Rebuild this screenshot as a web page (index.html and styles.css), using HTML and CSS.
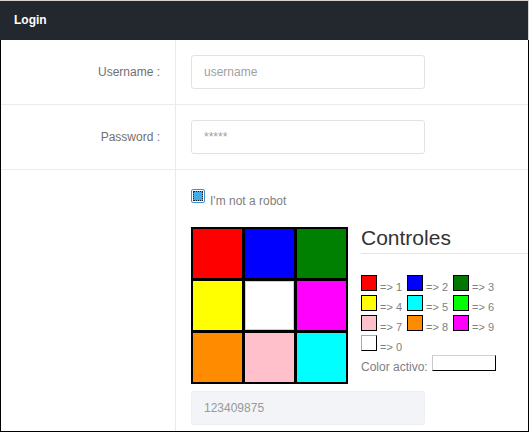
FILE: index.html
```html
<!DOCTYPE html>
<html lang="es">
<head>
<meta charset="utf-8">
<title>Login</title>
<link rel="stylesheet" href="styles.css">
</head>
<body>
<div class="page">
  <header class="topbar">Login</header>
  <main class="panel">
    <div class="row">
      <div class="label-cell">Username :</div>
      <div class="field-cell"><input class="field" type="text" placeholder="username"></div>
    </div>
    <div class="row">
      <div class="label-cell">Password :</div>
      <div class="field-cell"><input class="field" type="password" placeholder="*****"></div>
    </div>
    <div class="row row-last">
      <div class="label-cell"></div>
      <div class="field-cell field-cell-top">
        <div class="robot">
          <span class="check"><span class="check-inner"></span></span>
          <span class="robot-text">I'm not a robot</span>
        </div>
        <div class="captcha">
          <div class="board">
            <div class="cell c-red"></div>
            <div class="cell c-blue"></div>
            <div class="cell c-green"></div>
            <div class="cell c-yellow"></div>
            <div class="cell c-white"></div>
            <div class="cell c-magenta"></div>
            <div class="cell c-orange"></div>
            <div class="cell c-pink"></div>
            <div class="cell c-cyan"></div>
          </div>
          <div class="controls">
            <h3 class="controls-title">Controles</h3>
            <div class="palette">
              <div class="prow">
                <span class="item"><span class="sw s-red"></span><span class="key">=&gt; 1</span></span>
                <span class="item"><span class="sw s-blue"></span><span class="key">=&gt; 2</span></span>
                <span class="item"><span class="sw s-green"></span><span class="key">=&gt; 3</span></span>
              </div>
              <div class="prow">
                <span class="item"><span class="sw s-yellow"></span><span class="key">=&gt; 4</span></span>
                <span class="item"><span class="sw s-cyan"></span><span class="key">=&gt; 5</span></span>
                <span class="item"><span class="sw s-lime"></span><span class="key">=&gt; 6</span></span>
              </div>
              <div class="prow">
                <span class="item"><span class="sw s-pink"></span><span class="key">=&gt; 7</span></span>
                <span class="item"><span class="sw s-orange"></span><span class="key">=&gt; 8</span></span>
                <span class="item"><span class="sw s-magenta"></span><span class="key">=&gt; 9</span></span>
              </div>
              <div class="prow">
                <span class="item"><span class="sw s-white"></span><span class="key">=&gt; 0</span></span>
              </div>
              <div class="active-row">
                <span class="active-label">Color activo:</span>
                <span class="active-box"></span>
              </div>
            </div>
          </div>
        </div>
        <input class="field field-disabled" type="text" value="123409875" disabled>
      </div>
    </div>
  </main>
</div>
</body>
</html>
```

FILE: styles.css
```css
html, body {
  margin: 0;
  padding: 0;
}
body {
  font-family: "Liberation Sans", Arial, sans-serif;
  font-size: 12px;
  color: #666;
  background: #fff;
}
.page {
  width: 529px;
  height: 432px;
  box-sizing: border-box;
  padding-top: 1px;
  background: #d6d3ce;
  overflow: hidden;
}
.topbar {
  width: 528px;
  height: 39px;
  box-sizing: border-box;
  background: #23272e;
  color: #fff;
  font-weight: bold;
  font-size: 12px;
  line-height: 39px;
  padding-left: 14px;
}
.panel {
  display: block;
  width: 529px;
  height: 392px;
  box-sizing: border-box;
  background: #fff;
  border: 1px solid #000;
  border-top: none;
  overflow: hidden;
}
.row {
  display: flex;
  border-bottom: 1px solid #e9ebee;
}
.row-last {
  border-bottom: none;
}
.label-cell {
  width: 175px;
  flex: none;
  box-sizing: border-box;
  border-right: 1px solid #e9ebee;
  padding-right: 15px;
  display: flex;
  align-items: center;
  justify-content: flex-end;
  color: #707070;
}
.field-cell {
  flex: 1;
  padding: 15px;
}
.field-cell-top {
  padding-top: 19px;
  padding-right: 0;
}
.field {
  display: block;
  width: 234px;
  height: 34px;
  box-sizing: border-box;
  border: 1px solid #dfe3e8;
  border-radius: 3px;
  padding: 0 12px;
  font-family: "Liberation Sans", Arial, sans-serif;
  font-size: 12px;
  color: #888;
  background: #fff;
  outline: none;
}
.field::placeholder {
  color: #a0a0a0;
}
.field-disabled {
  background: #f3f4f7;
  border-color: #eceef1;
  color: #999;
  margin-top: 7px;
}
.robot {
  display: flex;
  align-items: flex-start;
  height: 14px;
  margin-bottom: 24px;
}
.check {
  width: 14px;
  height: 14px;
  box-sizing: border-box;
  border: 1px solid #3a8fd4;
  border-radius: 2px;
  padding: 1px;
  background: #fff;
  margin-right: 5px;
}
.check-inner {
  display: block;
  width: 10px;
  height: 10px;
  box-sizing: border-box;
  border: 1px dotted #222;
  background: #3daee9;
}
.robot-text {
  line-height: 14px;
  margin-top: 5px;
  color: #808080;
}
.captcha {
  display: flex;
  align-items: flex-start;
  gap: 13px;
}
.board {
  display: grid;
  grid-template-columns: repeat(3, 49px);
  grid-template-rows: repeat(3, 49px);
  gap: 3px;
  padding: 2px;
  background: #000;
  flex: none;
}
.cell {
  box-sizing: border-box;
}
.c-red { background: #ff0000; }
.c-blue { background: #0000ff; }
.c-green { background: #008000; }
.c-yellow { background: #ffff00; }
.c-white { background: #fff; border: 1px solid #cfcfcf; }
.c-magenta { background: #ff00ff; }
.c-orange { background: #ff8c00; }
.c-pink { background: #ffc0cb; }
.c-cyan { background: #00ffff; }
.controls {
  flex: 1;
}
.controls-title {
  margin: 0;
  font-weight: normal;
  font-size: 21px;
  line-height: 21px;
  color: #333;
  padding-bottom: 5px;
  border-bottom: 1px solid #e5e5e5;
}
.palette {
  padding-top: 21px;
}
.prow {
  display: flex;
  align-items: baseline;
  height: 16px;
  margin-bottom: 4px;
}
.item {
  display: flex;
  align-items: baseline;
  width: 46px;
}
.sw {
  display: inline-block;
  width: 16px;
  height: 16px;
  box-sizing: border-box;
  border: 1px solid #000;
}
.key {
  font-size: 11px;
  color: #808080;
  margin-left: 3px;
}
.s-red { background: #ff0000; }
.s-blue { background: #0000ff; }
.s-green { background: #007800; }
.s-yellow { background: #ffff00; }
.s-cyan { background: #00ffff; }
.s-lime { background: #00ff00; }
.s-pink { background: #ffc0cb; }
.s-orange { background: #ff8c00; }
.s-magenta { background: #ff00ff; }
.s-white { background: #fff; border-color: #aaa #000 #000 #aaa; }
.active-row {
  display: flex;
  align-items: baseline;
  margin-top: 2px;
}
.active-label {
  color: #808080;
  margin-right: 4px;
}
.active-box {
  display: inline-block;
  width: 64px;
  height: 16px;
  box-sizing: border-box;
  border: 1px solid;
  border-color: #d0d0d0 #000 #000 #c8c8c8;
  background: #fff;
}
```
